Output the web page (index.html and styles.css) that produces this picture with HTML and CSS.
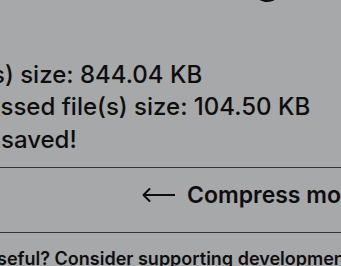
FILE: index.html
```html
<!DOCTYPE html>
<html lang="en">
<head>
<meta charset="utf-8">
<title>Compression results</title>
<link rel="stylesheet" href="styles.css">
</head>
<body>
<main class="page">
  <h1 class="title"><span class="title-lead">Finished shrinkin</span>g</h1>
  <section class="stats">
    <p class="stat stat-original"><span class="lead">Original file(</span>s) size: 844.04 KB</p>
    <p class="stat stat-compressed"><span class="lead">Compre</span>ssed file(s) size: 104.50 KB</p>
    <p class="stat stat-saved"><span class="lead">87.62%&nbsp;</span>saved!</p>
  </section>
  <div class="actions">
    <button class="back" type="button">
      <svg class="arrow" width="33" height="14" viewBox="0 0 33 14" aria-hidden="true">
        <path d="M32.5 7H1.5M7.5 1L1.5 7l6 6" fill="none" stroke="currentColor" stroke-width="2" stroke-linecap="round" stroke-linejoin="round"/>
      </svg>
      <span>Compress more</span>
    </button>
  </div>
  <p class="footer"><span class="lead">Found this u</span>seful? Consider supporting development</p>
</main>
</body>
</html>
```
FILE: styles.css
```css
html, body {
  margin: 0;
  padding: 0;
}
body {
  background: #a6a8a9;
  color: #0e0e0f;
  font-family: Inter, "Noto Sans", sans-serif;
  overflow: hidden;
  width: 341px;
  height: 266px;
}
.page {
  display: flex;
  flex-direction: column;
  width: 341px;
}
.title {
  margin: -45.5px 0 0 -400px;
  font-size: 40px;
  line-height: 48px;
  font-weight: 700;
  white-space: nowrap;
}
.title-lead {
  display: inline-block;
  width: 655px;
  text-align: right;
}
.lead {
  display: inline-block;
  width: 200px;
  text-align: right;
}
.stats {
  margin: 56.5px 0 0 -200px;
  white-space: nowrap;
}
.stat {
  margin: 0;
  font-size: 24px;
  line-height: 32.3px;
  font-weight: 500;
}
.stat-original .lead {
  width: 192px;
}
.stat-compressed .lead {
  width: 200.5px;
}
.stat-saved .lead {
  width: 201px;
}
.actions {
  margin-top: 11px;
  border-top: 1px solid #333435;
  border-bottom: 1px solid #333435;
  padding: 13px 0 23px 142px;
  margin-right: -300px;
}
.back {
  display: flex;
  align-items: center;
  gap: 12px;
  height: 28px;
  padding: 0;
  border: 0;
  background: none;
  color: inherit;
  font-family: inherit;
  font-size: 23px;
  font-weight: 600;
  white-space: nowrap;
  cursor: pointer;
}
.footer {
  margin: 14px 0 0 -203px;
  font-size: 18px;
  line-height: 24px;
  font-weight: 600;
  white-space: nowrap;
}
```
